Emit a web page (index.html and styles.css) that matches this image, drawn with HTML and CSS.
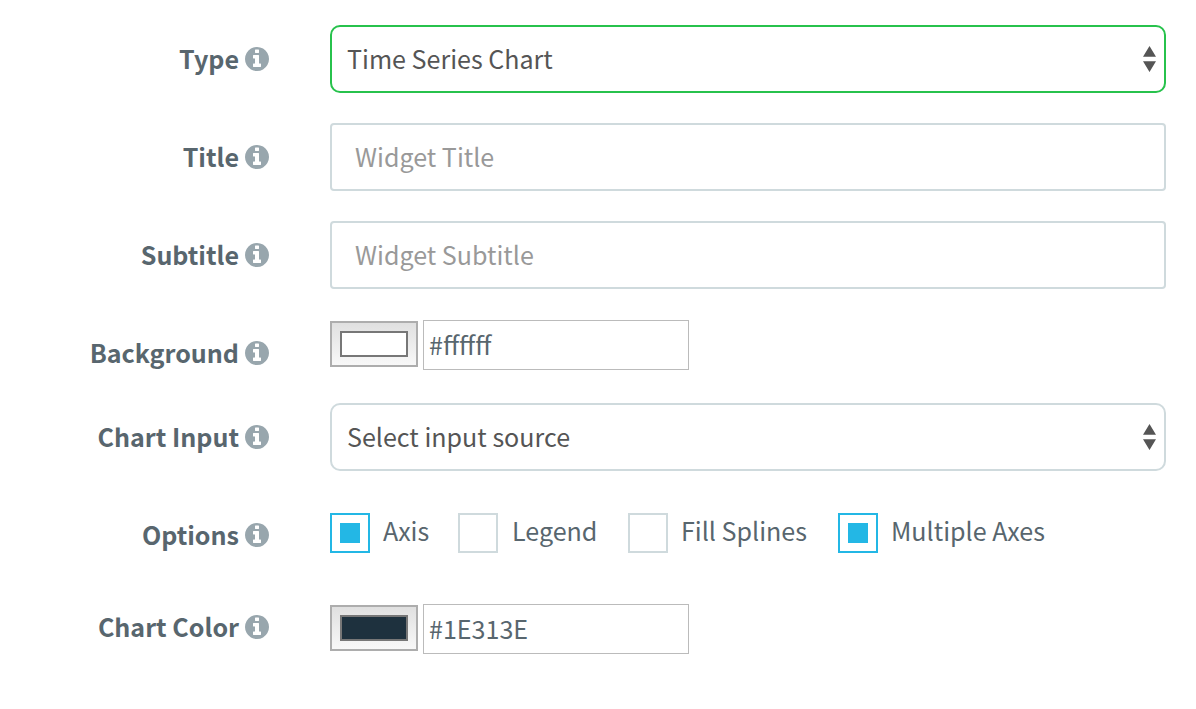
FILE: index.html
```
<!DOCTYPE html>
<html lang="en">
<head>
<meta charset="utf-8">
<title>Widget settings</title>
<link rel="stylesheet" href="styles.css">
</head>
<body>
<svg class="sprite" aria-hidden="true">
  <symbol id="info" viewBox="128 128 1536 1536"><path d="M1152 1376v-160q0-14-9-23t-23-9h-96v-512q0-14-9-23t-23-9h-320q-14 0-23 9t-9 23v160q0 14 9 23t23 9h96v320h-96q-14 0-23 9t-9 23v160q0 14 9 23t23 9h448q14 0 23-9t9-23zm-128-896v-160q0-14-9-23t-23-9h-192q-14 0-23 9t-9 23v160q0 14 9 23t23 9h192q14 0 23-9t9-23zm640 416q0 209-103 385.5t-279.5 279.5-385.5 103-385.5-103-279.5-279.5-103-385.5 103-385.5 279.5-279.5 385.5-103 385.5 103 279.5 279.5 103 385.5z"/></symbol>
  <symbol id="sort" viewBox="0 0 13 26"><path d="M6.5 0L13 10.7H0zM0 15.3h13L6.5 26z"/></symbol>
</svg>
<main class="form">
  <div class="row">
    <div class="label"><span>Type</span><svg class="info"><use href="#info"/></svg></div>
    <div class="field select active"><span>Time Series Chart</span><svg class="sort"><use href="#sort"/></svg></div>
  </div>
  <div class="row">
    <div class="label"><span>Title</span><svg class="info"><use href="#info"/></svg></div>
    <div class="field input"><span>Widget Title</span></div>
  </div>
  <div class="row">
    <div class="label"><span>Subtitle</span><svg class="info"><use href="#info"/></svg></div>
    <div class="field input"><span>Widget Subtitle</span></div>
  </div>
  <div class="row row-background">
    <div class="label"><span>Background</span><svg class="info"><use href="#info"/></svg></div>
    <div class="color"><div class="picker"><div class="swatch"></div></div><div class="hex"><span>#ffffff</span></div></div>
  </div>
  <div class="row">
    <div class="label"><span>Chart Input</span><svg class="info"><use href="#info"/></svg></div>
    <div class="field select"><span>Select input source</span><svg class="sort"><use href="#sort"/></svg></div>
  </div>
  <div class="row row-options">
    <div class="label"><span>Options</span><svg class="info"><use href="#info"/></svg></div>
    <div class="options">
      <div class="option option-axis"><i class="box checked"></i><span>Axis</span></div>
      <div class="option option-legend"><i class="box"></i><span>Legend</span></div>
      <div class="option option-fill"><i class="box"></i><span>Fill Splines</span></div>
      <div class="option"><i class="box checked"></i><span>Multiple Axes</span></div>
    </div>
  </div>
  <div class="row row-color">
    <div class="label"><span>Chart Color</span><svg class="info"><use href="#info"/></svg></div>
    <div class="color"><div class="picker"><div class="swatch dark"></div></div><div class="hex"><span>#1E313E</span></div></div>
  </div>
</main>
</body>
</html>
```
FILE: styles.css
```
* { box-sizing: border-box; }
body {
  margin: 0;
  background: #fff;
  color: #58666e;
  font-family: "Noto Sans CJK SC", "Noto Sans", sans-serif;
  font-size: 25.07px;
}
.sprite { display: none; }
.form {
  display: flex;
  flex-direction: column;
  gap: 30px;
  padding: 25px 30px 0 0;
}
.row {
  display: grid;
  grid-template-columns: 269px 1fr;
  column-gap: 61px;
  align-items: start;
  height: 68px;
  white-space: nowrap;
}
.row-background { height: 54px; }
.row-options { height: 62px; }
.label {
  display: flex;
  justify-content: flex-end;
  align-items: center;
  gap: 6px;
  height: 68px;
  font-weight: 700;
}
.label span { line-height: 66px; padding-bottom: 2px; }
.info { width: 24px; height: 24px; fill: #98a6ad; }
.field {
  display: flex;
  align-items: center;
  height: 68px;
  border: 2px solid #cfdadd;
  line-height: 62px;
}
.field span { padding-bottom: 2px; }
.select {
  justify-content: space-between;
  padding: 0 8px 0 15px;
  border-radius: 10px;
  color: #555;
}
.select.active { border-color: #27c24c; }
.sort { width: 13px; height: 26px; fill: #555; }
.input { padding: 0 23px; border-radius: 4px; color: #999; }
.color { display: flex; align-items: flex-start; gap: 5px; padding-top: 1px; }
.row-color .color { padding-top: 11px; }
.picker {
  width: 88px;
  height: 46px;
  margin-top: 1px;
  padding: 8px;
  border: 2px solid #adadad;
  background: linear-gradient(#e0e0e0, #f8f8f8);
}
.swatch { width: 68px; height: 26px; border: 2px solid #777; background: #fff; }
.swatch.dark { background: #1e313e; }
.hex {
  width: 266px;
  height: 50px;
  padding-left: 5px;
  border: 1px solid #bbb;
  line-height: 46px;
}
.options { display: flex; padding-top: 12px; }
.option { display: flex; gap: 13px; line-height: 34px; }
.option-axis { width: 128px; }
.option-legend { width: 170px; gap: 14px; }
.option-fill { width: 210px; }
.box {
  width: 40px;
  height: 40px;
  padding: 8px;
  border: 2px solid #cfdadd;
}
.box.checked { border-color: #23b7e5; background: #23b7e5 content-box; }
```
